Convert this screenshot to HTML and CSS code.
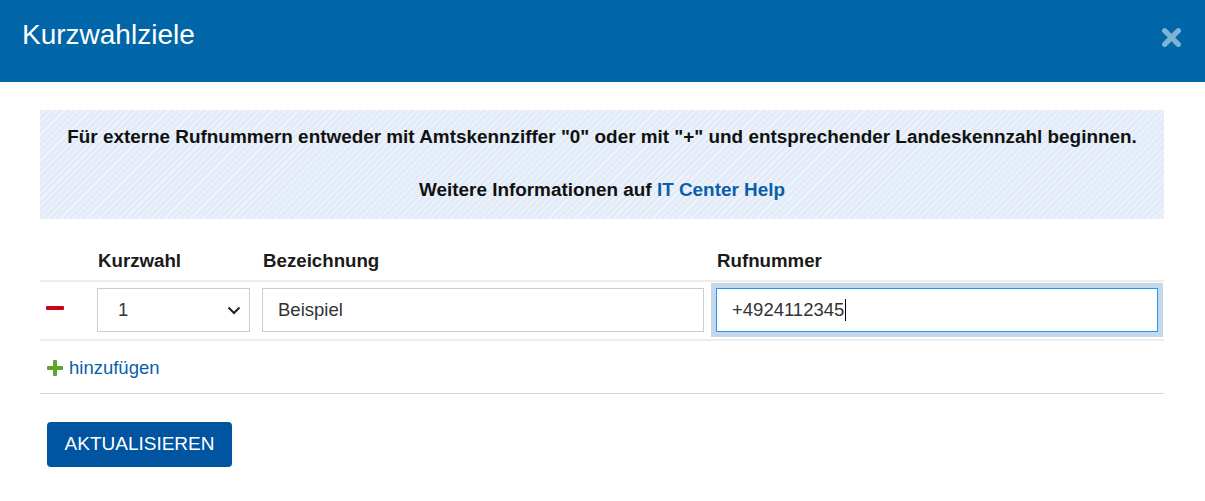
FILE: index.html
```html
<!DOCTYPE html>
<html lang="de">
<head>
<meta charset="utf-8">
<title>Kurzwahlziele</title>
<link rel="stylesheet" href="styles.css">
</head>
<body>
<div class="modal">
  <div class="modal-header">
    <h1 class="modal-title">Kurzwahlziele</h1>
    <button class="close" aria-label="Schließen">
      <svg width="20" height="20" viewBox="0 0 20 20"><path d="M3.5 3.5 L16.5 16.5 M16.5 3.5 L3.5 16.5" stroke="#7fb3d6" stroke-width="5" stroke-linecap="round" fill="none"/></svg>
    </button>
  </div>
  <div class="modal-body">
    <div class="info">
      <p class="info-line">Für externe Rufnummern entweder mit Amtskennziffer "0" oder mit "+" und entsprechender Landeskennzahl beginnen.</p>
      <p class="info-line info-second">Weitere Informationen auf <a class="info-link" href="#">IT Center Help</a></p>
    </div>
    <div class="table">
      <div class="thead">
        <div class="th"></div>
        <div class="th">Kurzwahl</div>
        <div class="th">Bezeichnung</div>
        <div class="th">Rufnummer</div>
      </div>
      <div class="trow">
        <div class="td td-remove"><span class="minus"></span></div>
        <div class="td">
          <div class="select">
            <span class="select-value">1</span>
            <svg class="chevron" width="14" height="9" viewBox="0 0 14 9"><path d="M1.5 1.5 L7 7 L12.5 1.5" stroke="#222" stroke-width="2" fill="none"/></svg>
          </div>
        </div>
        <div class="td"><div class="field">Beispiel</div></div>
        <div class="td"><div class="field field-focus">+4924112345<span class="caret"></span></div></div>
      </div>
    </div>
    <div class="add-row">
      <a class="add-link" href="#"><span class="plus"></span>hinzufügen</a>
    </div>
    <button class="btn-primary">AKTUALISIEREN</button>
  </div>
</div>
</body>
</html>
```
FILE: styles.css
```css
* { box-sizing: border-box; }
html, body {
  margin: 0;
  padding: 0;
  background: #ffffff;
  font-family: "Liberation Sans", Arial, sans-serif;
  font-size: 18.5px;
  color: #222;
}
.modal { width: 1205px; }
.modal-header {
  height: 82px;
  background: #0066a8;
  display: flex;
  justify-content: space-between;
  align-items: flex-start;
  padding: 19px 23px 0 22px;
}
.modal-title {
  margin: 0;
  font-size: 28px;
  font-weight: normal;
  color: #ffffff;
  line-height: 32px;
}
.close {
  margin-top: 8px;
  border: 0;
  background: none;
  padding: 0;
  width: 21px;
  height: 21px;
  display: block;
}
.close svg { display: block; width: 21px; height: 21px; }
.modal-body {
  padding: 28px 41px 0 40px;
}
.info {
  background: repeating-linear-gradient(135deg, #e2ebf7 0 3px, #edf3fa 3px 4.6px);
  padding: 14px 10px 16px;
  text-align: center;
  font-weight: bold;
  font-size: 18.9px;
  color: #111;
}
.info-line {
  margin: 0;
  line-height: 26px;
}
.info-second { margin-top: 27px; }
.info-link {
  color: #0b5ea8;
  text-decoration: none;
}
.table { width: 1124px; }
.thead, .trow {
  display: grid;
  grid-template-columns: 51px 165px 454px 454px;
}
.th {
  padding: 31px 7px 9px;
  line-height: 21px;
  font-weight: bold;
  font-size: 18.7px;
  color: #1a1a1a;
}
.trow {
  border-top: 2px solid #ececec;
  border-bottom: 2px solid #ececec;
}
.td {
  padding: 6px 6px 7px;
}
.td-remove {
  display: flex;
  align-items: center;
  padding-bottom: 11px;
}
.minus {
  display: block;
  width: 18px;
  height: 4px;
  border-radius: 1px;
  background: #d0021b;
}
.select, .field {
  height: 44px;
  border: 1px solid #cccccc;
  background: #fff;
  display: flex;
  align-items: center;
  color: #333;
}
.select {
  padding: 0 8px 0 20px;
  justify-content: space-between;
}
.chevron { display: block; margin-right: 0; }
.field {
  padding: 0 15px;
}
.field-focus {
  border-color: #2c93f6;
  box-shadow: 0 0 0 5px #c4d8ec;
}
.caret {
  display: inline-block;
  width: 1px;
  height: 22px;
  background: #000;
  margin-left: 1px;
}
.add-row {
  padding: 16px 0 13px;
  border-bottom: 1px solid #d6d6d6;
  line-height: 21px;
}
.add-link {
  display: inline-flex;
  align-items: center;
  color: #0b5ea8;
  text-decoration: none;
  padding-left: 7px;
}
.plus {
  position: relative;
  display: inline-block;
  width: 16px;
  height: 16px;
  margin-right: 6px;
}
.plus::before, .plus::after {
  content: "";
  position: absolute;
  background: #5ba52b;
  border-radius: 1px;
}
.plus::before { left: 0; top: 6px; width: 16px; height: 4px; }
.plus::after { left: 6px; top: 0; width: 4px; height: 16px; }
.btn-primary {
  margin: 28px 0 0 7px;
  height: 45px;
  width: 185px;
  border: 0;
  border-radius: 4px;
  background: #0054a0;
  color: #fff;
  font-family: "Liberation Sans", Arial, sans-serif;
  font-size: 19px;
  padding: 0;
  display: block;
}
```
